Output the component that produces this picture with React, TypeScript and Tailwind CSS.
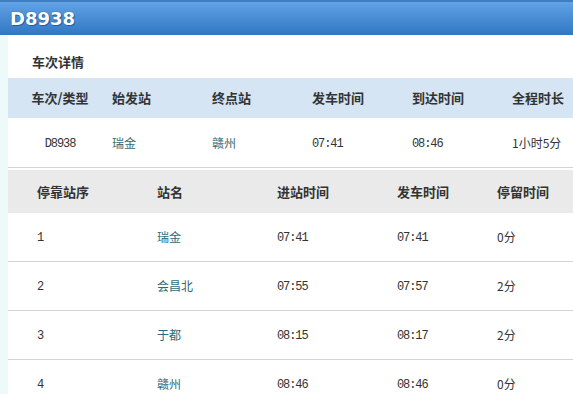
import React from "react";

const cjk = '"Noto Sans CJK SC", "Noto Sans", sans-serif';
const mono = '"Liberation Mono", "Noto Sans CJK SC", monospace';

function Num({ children }: { children: React.ReactNode }) {
  return (
    <span className="text-[12px] tracking-[-1.1px] text-[#333]" style={{ fontFamily: mono }}>
      {children}
    </span>
  );
}

function Station({ children }: { children: React.ReactNode }) {
  return <span className="text-[12px] text-[#2e6b7a]">{children}</span>;
}

const stops = [
  { n: "1", name: "瑞金", a: "07:41", d: "07:41", s: "0分" },
  { n: "2", name: "会昌北", a: "07:55", d: "07:57", s: "2分" },
  { n: "3", name: "于都", a: "08:15", d: "08:17", s: "2分" },
  { n: "4", name: "赣州", a: "08:46", d: "08:46", s: "0分" },
];

export default function App() {
  return (
    <div className="w-[573px] h-[394px] overflow-hidden bg-white" style={{ fontFamily: cjk }}>
      <div className="h-[35px] border-t-2 border-[#3f7fbf] bg-gradient-to-b from-[#62a2e6] to-[#2f77c3] flex items-center pl-[10px]">
        <span
          className="text-white font-bold text-[18px] leading-none [text-shadow:0_0_1px_#1d4f86,1px_1px_0_#24609e]"
          style={{ fontFamily: '"DejaVu Sans", sans-serif' }}
        >
          D8938
        </span>
      </div>
      <div className="flex h-[359px]">
        <div className="w-[8px] shrink-0 bg-[#eefafa]" />
        <div className="flex-1 flex flex-col">
          <div className="h-[43px] shrink-0 pt-[18px] pl-[24px] text-[13px] leading-[17px] font-bold text-[#333]">
            车次详情
          </div>
          <div className="h-[40px] shrink-0 bg-[#d5e5f3] grid grid-cols-[104px_100px_100px_100px_100px_1fr] items-center text-[13px] font-bold text-[#333]">
            <div className="text-center">车次/类型</div>
            <div>始发站</div>
            <div>终点站</div>
            <div>发车时间</div>
            <div>到达时间</div>
            <div>全程时长</div>
          </div>
          <div className="h-[50px] shrink-0 border-b border-[#d4d4d4] grid grid-cols-[104px_100px_100px_100px_100px_1fr] items-center text-[12px] text-[#333]">
            <div className="text-center"><Num>D8938</Num></div>
            <div><Station>瑞金</Station></div>
            <div><Station>赣州</Station></div>
            <div><Num>07:41</Num></div>
            <div><Num>08:46</Num></div>
            <div className="text-[12px] text-[#333]">1小时5分</div>
          </div>
          <div className="mt-[2px] h-[43px] shrink-0 bg-[#eaeaea] grid grid-cols-[120px_120px_120px_100px_1fr] items-center pl-[29px] text-[13px] font-bold text-[#333]">
            <div>停靠站序</div>
            <div>站名</div>
            <div>进站时间</div>
            <div>发车时间</div>
            <div>停留时间</div>
          </div>
          {stops.map((r) => (
            <div
              key={r.n}
              className="h-[49px] shrink-0 border-b border-[#d4d4d4] grid grid-cols-[120px_120px_120px_100px_1fr] items-center pl-[29px] text-[12px] text-[#333]"
            >
              <div><Num>{r.n}</Num></div>
              <div><Station>{r.name}</Station></div>
              <div><Num>{r.a}</Num></div>
              <div><Num>{r.d}</Num></div>
              <div className="text-[12px] text-[#333]">{r.s}</div>
            </div>
          ))}
        </div>
      </div>
    </div>
  );
}
